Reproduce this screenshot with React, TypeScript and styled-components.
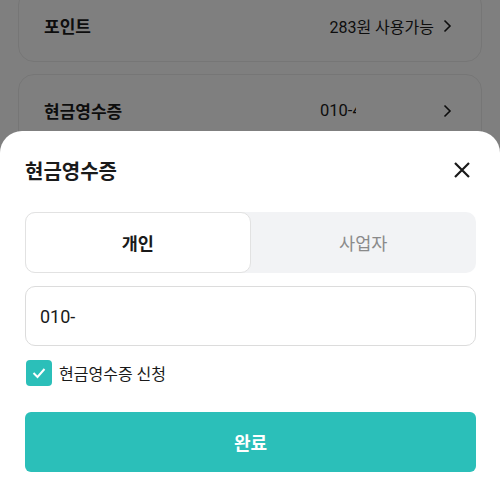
import React from "react";
import styled, { createGlobalStyle } from "styled-components";

const Global = createGlobalStyle`
  html, body { margin: 0; padding: 0; background: #fff; }
  body { font-family: Roboto, "Noto Sans CJK KR", sans-serif; }
  * { box-sizing: border-box; }
`;

const Screen = styled.div`
  position: relative;
  width: 500px;
  height: 484px;
  overflow: hidden;
  background: #fff;
`;

const List = styled.div`
  display: flex;
  flex-direction: column;
  gap: 12px;
  padding: 0 18px;
  margin-top: -11px;
`;

const Card = styled.div`
  height: 73px;
  border: 1px solid #ececec;
  border-radius: 16px;
  background: #fff;
  display: flex;
  align-items: center;
  padding: 0 29px 0 25px;
`;

const CardTitle = styled.div`
  font-size: 17px;
  font-weight: 700;
  color: #1a1a1a;
  flex: 1;
`;

const CardValue = styled.div`
  font-size: 16px;
  color: #1a1a1a;
  display: flex;
  align-items: center;
  gap: 8px;
`;

const Clip = styled.span`
  display: inline-block;
  width: 36px;
  margin-right: 78px;
  overflow: hidden;
  white-space: nowrap;
  font-size: 16.5px;
`;

const Overlay = styled.div`
  position: absolute;
  inset: 0;
  background: rgba(0, 0, 0, 0.5);
  display: flex;
  flex-direction: column;
  justify-content: flex-end;
`;

const Sheet = styled.div`
  height: 353px;
  background: #fff;
  border-radius: 22px 22px 0 0;
  padding: 22px 24px 0 25px;
  display: flex;
  flex-direction: column;
`;

const Header = styled.div`
  height: 34px;
  display: flex;
  align-items: center;
  justify-content: space-between;
`;

const Title = styled.div`
  font-size: 20px;
  font-weight: 700;
  color: #1a1a1a;
`;

const CloseBtn = styled.div`
  width: 24px;
  height: 24px;
  margin-right: 2px;
  display: flex;
  align-items: center;
  justify-content: center;
`;

const Tabs = styled.div`
  margin-top: 25px;
  height: 61px;
  background: #f2f3f5;
  border-radius: 10px;
  display: flex;
`;

const Tab = styled.div<{ $active?: boolean }>`
  flex: 1;
  display: flex;
  align-items: center;
  justify-content: center;
  font-size: 17.5px;
  border-radius: 10px;
  font-weight: ${(p) => (p.$active ? 700 : 400)};
  color: ${(p) => (p.$active ? "#1a1a1a" : "#8a8a8a")};
  background: ${(p) => (p.$active ? "#fff" : "transparent")};
  border: 1px solid ${(p) => (p.$active ? "#e2e2e2" : "transparent")};
`;

const Input = styled.div`
  margin-top: 13px;
  height: 60px;
  border: 1px solid #dcdcdc;
  border-radius: 10px;
  display: flex;
  align-items: center;
  padding-left: 14px;
  font-size: 18px;
  color: #1a1a1a;
`;

const CheckRow = styled.div`
  margin-top: 14px;
  height: 26px;
  display: flex;
  align-items: center;
  gap: 7px;
  padding-left: 1px;
`;

const Box = styled.div`
  width: 26px;
  height: 26px;
  border-radius: 4px;
  background: #2bbfb9;
  display: flex;
  align-items: center;
  justify-content: center;
`;

const CheckLabel = styled.div`
  font-size: 16px;
  color: #1a1a1a;
`;

const Button = styled.div`
  margin-top: 26px;
  height: 60px;
  border-radius: 6px;
  background: #2bbfb9;
  color: #fff;
  font-size: 18px;
  font-weight: 700;
  display: flex;
  align-items: center;
  justify-content: center;
`;

const Chevron = () => (
  <svg width="10" height="14" viewBox="0 0 10 14">
    <path d="M2.5 1.5 L8 7 L2.5 12.5" fill="none" stroke="#1a1a1a" strokeWidth="1.6" />
  </svg>
);

export default function App() {
  return (
    <Screen>
      <Global />
      <List>
        <Card>
          <CardTitle>포인트</CardTitle>
          <CardValue>
            283원 사용가능 <Chevron />
          </CardValue>
        </Card>
        <Card>
          <CardTitle>현금영수증</CardTitle>
          <CardValue>
            <Clip>010-4</Clip>
            <Chevron />
          </CardValue>
        </Card>
      </List>
      <Overlay>
        <Sheet>
          <Header>
            <Title>현금영수증</Title>
            <CloseBtn>
              <svg width="18" height="18" viewBox="0 0 18 18">
                <path d="M2 2 L16 16 M16 2 L2 16" stroke="#1a1a1a" strokeWidth="2.2" />
              </svg>
            </CloseBtn>
          </Header>
          <Tabs>
            <Tab $active>개인</Tab>
            <Tab>사업자</Tab>
          </Tabs>
          <Input>010-</Input>
          <CheckRow>
            <Box>
              <svg width="16" height="16" viewBox="0 0 16 16">
                <path d="M2.5 8 L6.5 12 L13.5 4" fill="none" stroke="#fff" strokeWidth="2" />
              </svg>
            </Box>
            <CheckLabel>현금영수증 신청</CheckLabel>
          </CheckRow>
          <Button>완료</Button>
        </Sheet>
      </Overlay>
    </Screen>
  );
}
